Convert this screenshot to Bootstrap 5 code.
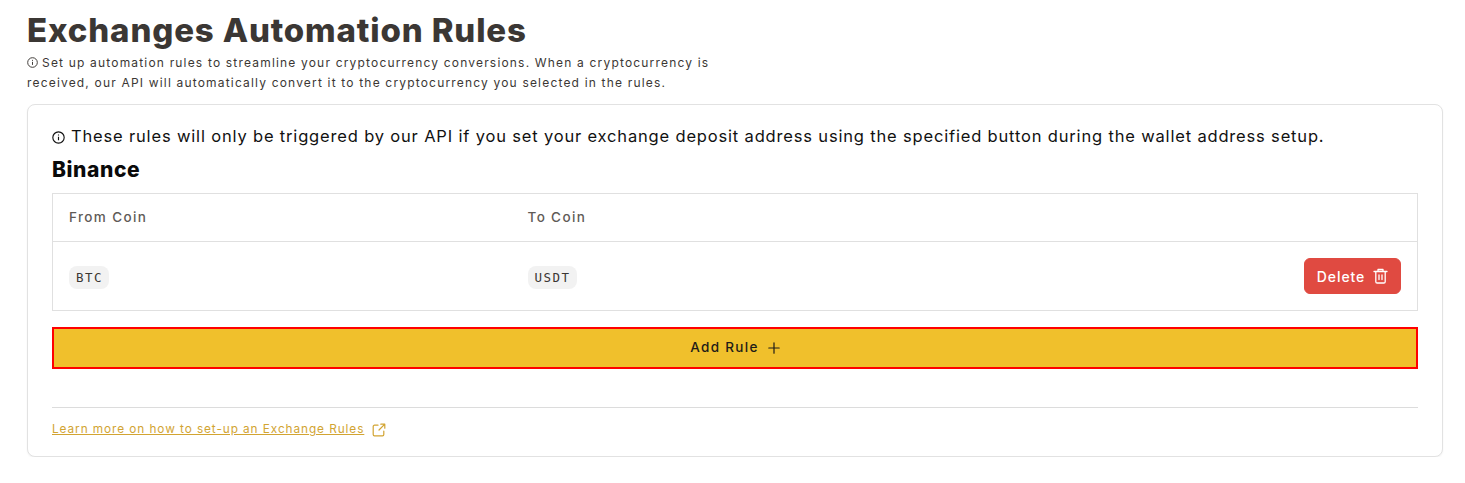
<!DOCTYPE html>
<html lang="en">
<head>
<meta charset="utf-8">
<title>Exchanges Automation Rules</title>
<link href="https://cdn.jsdelivr.net/npm/bootstrap@5.3.0/dist/css/bootstrap.min.css" rel="stylesheet">
<style>
html,body{background:#fff;}
body{font-family:Inter,"Liberation Sans",sans-serif;color:#000;}
.page-wrap{padding:11px 22px 0 27px;}
.page-title{font-size:33px;line-height:38px;font-weight:800;color:#3b3734;letter-spacing:.85px;margin:0 0 4px;}
.page-sub{font-size:12px;line-height:20px;letter-spacing:1.18px;color:#3b3734;width:700px;margin:0 0 11px;}
.rule-card{border:1px solid #e2e2e2;border-radius:8px;padding:20px 24px 16px;height:353px;box-shadow:0 1px 2px rgba(0,0,0,.05);}
.notice{font-size:16.5px;line-height:22px;letter-spacing:.83px;color:#111;margin:0 0 11px;}
.notice-ico{margin-right:6px;vertical-align:-1.5px;}
.sub-ico{margin-right:4px;vertical-align:-1px;}
.ex-name{font-size:21px;line-height:24px;font-weight:800;letter-spacing:.6px;color:#0a0a0a;margin:0 0 11px;}
.rule-table{border:1px solid #e0e0e0;margin:0 0 16px;}
.head-row{height:48px;border-bottom:1px solid #e0e0e0;color:#5f5b57;font-size:13.5px;letter-spacing:1.37px;font-weight:500;}
.body-row{height:68px;}
.col-from{width:474.5px;padding-left:16px;flex:none;}
.coin-tag{display:inline-block;background:#f2f2f2;border-radius:8px;font-family:"DejaVu Sans Mono","Liberation Mono",monospace;font-size:12.5px;line-height:23px;padding:0 6px 0 7px;letter-spacing:1.5px;color:#3b3734;font-weight:500;}
.del-btn{background:#e04a41;border-color:#e04a41;color:#fff;height:36px;width:97px;border-radius:6px;font-size:14px;letter-spacing:.9px;font-weight:500;margin-right:16px;padding:0;}
.add-btn{background:#f0c02c;border:2px solid #f00;border-radius:0;height:42px;color:#1f1c18;font-size:13.5px;letter-spacing:1.3px;font-weight:500;padding:0 0 1px;}
.add-btn:hover{background:#f0c02c;border-color:#f00;color:#1f1c18;}
.plus-ico{margin-left:1px;}
.rule-hr{border:0;border-top:1px solid #dcdcdc;opacity:1;margin:38px 0 13px;}
.learn{font-size:11.8px;letter-spacing:.93px;color:#d2a432;text-decoration:underline;}
.learn:hover{color:#d2a432;}
</style>
</head>
<body>
<div class="page-wrap">
  <h1 class="page-title">Exchanges Automation Rules</h1>
  <p class="page-sub"><svg width="11" height="11" viewBox="0 0 16 16" fill="none" stroke="currentColor" stroke-width="1.4" class="sub-ico"><circle cx="8" cy="8" r="7"/><path d="M8 7v4.5M8 4.2v1.4"/></svg>Set up automation rules to streamline your cryptocurrency conversions. When a cryptocurrency is received, our API will automatically convert it to the cryptocurrency you selected in the rules.</p>
  <div class="rule-card bg-white">
    <p class="notice"><svg width="13" height="13" viewBox="0 0 16 16" fill="none" stroke="currentColor" stroke-width="1.4" class="notice-ico"><circle cx="8" cy="8" r="7"/><path d="M8 7v4.5M8 4.2v1.4"/></svg>These rules will only be triggered by our API if you set your exchange deposit address using the specified button during the wallet address setup.</p>
    <h2 class="ex-name">Binance</h2>
    <div class="rule-table">
      <div class="head-row d-flex align-items-center">
        <div class="col-from">From Coin</div>
        <div>To Coin</div>
      </div>
      <div class="body-row d-flex align-items-center">
        <div class="col-from"><span class="coin-tag">BTC</span></div>
        <div><span class="coin-tag">USDT</span></div>
        <button type="button" class="btn del-btn ms-auto d-flex align-items-center justify-content-center gap-2">Delete
          <svg width="15" height="16" viewBox="0 0 15 16" fill="none" stroke="currentColor" stroke-width="1.3" stroke-linecap="round" stroke-linejoin="round"><path d="M1 3.5h13M5 3.5V1.5h5v2M2.8 3.5v10.2a1.3 1.3 0 0 0 1.3 1.3h6.8a1.3 1.3 0 0 0 1.3-1.3V3.5M6 7v4.5M9 7v4.5"/></svg>
        </button>
      </div>
    </div>
    <button type="button" class="btn add-btn w-100 d-flex align-items-center justify-content-center gap-2">Add Rule
      <svg width="12" height="12" viewBox="0 0 12 12" fill="none" stroke="currentColor" stroke-width="1.2" stroke-linecap="round" class="plus-ico"><path d="M.8 6h10.4M6 .8v10.4"/></svg>
    </button>
    <hr class="rule-hr">
    <div class="d-flex align-items-center gap-2">
      <a href="#" class="learn">Learn more on how to set-up an Exchange Rules</a>
      <svg width="14" height="14" viewBox="0 0 14 14" fill="none" stroke="#d2a432" stroke-width="1.2" stroke-linecap="round" stroke-linejoin="round"><path d="M6 2.2H2.5a1.3 1.3 0 0 0-1.3 1.3v8a1.3 1.3 0 0 0 1.3 1.3h8a1.3 1.3 0 0 0 1.3-1.3V8M7 7l5.8-5.8M8.8 1.2h4v4"/></svg>
    </div>
  </div>
</div>
<script src="https://cdn.jsdelivr.net/npm/bootstrap@5.3.0/dist/js/bootstrap.bundle.min.js"></script>
</body>
</html>
